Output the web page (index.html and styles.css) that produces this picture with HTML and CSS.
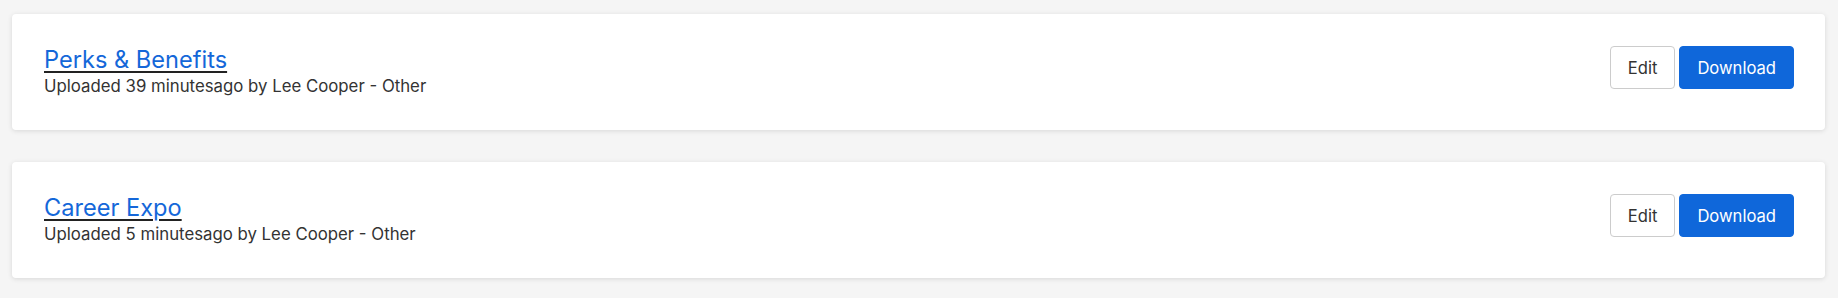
FILE: index.html
```html
<!DOCTYPE html>
<html lang="en">
<head>
    <meta charset="UTF-8">
    <meta name="viewport" content="width=device-width, initial-scale=1.0">
    <title>Documents</title>
    <link rel="stylesheet" href="styles.css">
</head>
<body>
    <div id="doc-list">
        <div class="doc-card">
            <div class="doc-info">
                <a href="#" class="doc-title">Perks &amp; Benefits</a>
                <div class="doc-meta">Uploaded 39 minutesago by Lee Cooper - Other</div>
            </div>
            <div class="doc-actions">
                <button class="btn btn-edit">Edit</button>
                <button class="btn btn-download">Download</button>
            </div>
        </div>
        <div class="doc-card">
            <div class="doc-info">
                <a href="#" class="doc-title">Career Expo</a>
                <div class="doc-meta">Uploaded 5 minutesago by Lee Cooper - Other</div>
            </div>
            <div class="doc-actions">
                <button class="btn btn-edit">Edit</button>
                <button class="btn btn-download">Download</button>
            </div>
        </div>
    </div>
</body>
</html>
```

FILE: styles.css
```css
body{
    margin: 0px;
    background-color: #f5f5f5;
    font-family: Inter, "Liberation Sans", Arial, sans-serif;
    color: #333;
}
#doc-list{
    display: flex;
    flex-direction: column;
    gap: 32px;
    padding: 14px 13px 14px 12px;
}
.doc-card{
    display: flex;
    justify-content: space-between;
    align-items: flex-start;
    background-color: #fff;
    border-radius: 4px;
    box-shadow: 0px 1px 5px 0px rgba(0, 0, 0, 0.12);
    padding: 32px 31px 32px 32px;
    height: 52px;
}
.doc-info{
    display: flex;
    flex-direction: column;
}
.doc-title{
    font-size: 23.6px;
    line-height: 28px;
    color: #1467d9;
    text-decoration: underline;
    text-decoration-color: #222;
    text-decoration-thickness: 2px;
    text-underline-offset: 3px;
}
.doc-meta{
    font-size: 16.8px;
    line-height: 24px;
    color: #333;
}
.doc-actions{
    display: flex;
    gap: 4px;
}
.btn{
    font-family: Inter, "Liberation Sans", Arial, sans-serif;
    font-size: 16.6px;
    height: 43px;
    padding: 0px 17px;
    border-radius: 4px;
    cursor: pointer;
}
.btn-edit{
    background-color: #fff;
    color: #333;
    border: 1px solid #ccc;
}
.btn-download{
    background-color: #0f67da;
    color: #fff;
    border: 1px solid #0f67da;
}
```
